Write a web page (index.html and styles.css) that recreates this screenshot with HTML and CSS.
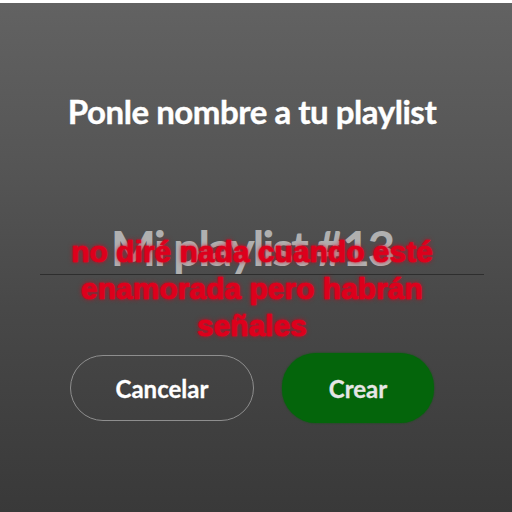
FILE: index.html
```html
<!DOCTYPE html>
<html lang="es">
<head>
<meta charset="utf-8">
<title>Ponle nombre a tu playlist</title>
<link rel="stylesheet" href="styles.css">
</head>
<body>
<main class="screen">
  <h1 class="title">Ponle nombre a tu playlist</h1>
  <div class="field-wrap">
    <div class="field">Mi playlist #13</div>
    <p class="caption">no diré nada cuando esté<br>enamorada pero habrán<br>señales</p>
  </div>
  <div class="actions">
    <button class="btn btn-cancel" type="button">Cancelar</button>
    <button class="btn btn-create" type="button">Crear</button>
  </div>
</main>
</body>
</html>
```
FILE: styles.css
```css
html, body {
  margin: 0;
  padding: 0;
}
body {
  width: 512px;
  height: 512px;
  overflow: hidden;
  background: #ffffff;
}
.screen {
  box-sizing: border-box;
  width: 512px;
  height: 512px;
  border-top: 3px solid #ffffff;
  padding-right: 8px;
  background: linear-gradient(to bottom, #626262 0%, #565656 30%, #484848 60%, #393939 100%);
  display: flex;
  flex-direction: column;
  align-items: center;
  font-family: "Lato", "Noto Sans", sans-serif;
}
.title {
  margin: 88px 0 0;
  font-size: 33px;
  line-height: 40px;
  font-weight: 700;
  color: #ffffff;
  letter-spacing: -0.45px;
  -webkit-text-stroke: 0.4px #ffffff;
}
.field-wrap {
  position: relative;
  margin-top: 93px;
  margin-left: 20px;
  width: 444px;
}
.field {
  border-bottom: 1px solid #2e2e2e;
  padding-right: 20px;
  text-align: center;
  font-size: 48px;
  line-height: 48px;
  font-weight: 700;
  color: #b0b0b0;
  letter-spacing: -2.2px;
  padding-bottom: 2px;
}
.caption {
  position: absolute;
  left: 0;
  right: 20px;
  top: 9px;
  margin: 0;
  text-align: center;
  font-family: "Liberation Sans", Arial, sans-serif;
  font-weight: 700;
  font-size: 30px;
  line-height: 37px;
  color: #dd001c;
  -webkit-text-stroke: 0.6px #dd001c;
  text-shadow: 0 0 2px rgba(230, 0, 30, 1), 0 0 5px rgba(210, 0, 30, 0.8);
}
.actions {
  margin-top: 78px;
  display: flex;
  align-items: center;
  gap: 28px;
}
.btn {
  font-family: "Lato", "Noto Sans", sans-serif;
  font-weight: 700;
  font-size: 24px;
  border-radius: 34px;
  padding: 0;
  margin: 0;
  -webkit-text-stroke: 0.3px currentColor;
}
.btn-cancel {
  width: 184px;
  height: 66px;
  background: transparent;
  border: 1.5px solid #8e8e8e;
  color: #ffffff;
}
.btn-create {
  width: 152px;
  height: 70px;
  background: #04650b;
  border: none;
  color: #e6e6e6;
  box-shadow: 0 0 2px #0a5a0e;
}
```
